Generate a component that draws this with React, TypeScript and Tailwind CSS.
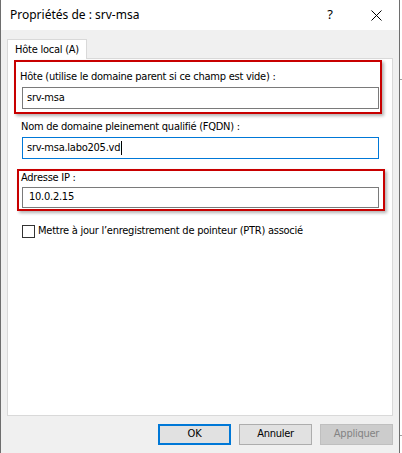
const ui = { fontFamily: '"DejaVu Sans Condensed", "Liberation Sans", sans-serif' };
const title = { fontFamily: '"Noto Sans", "Open Sans", sans-serif' };

function CloseIcon() {
  return (
    <svg width="11" height="11" viewBox="0 0 11 11">
      <path d="M0.5 0.5 L10.5 10.5 M10.5 0.5 L0.5 10.5" stroke="#000" strokeWidth="1" />
    </svg>
  );
}

function Button({ label, primary, disabled }: { label: string; primary?: boolean; disabled?: boolean }) {
  const cls = disabled
    ? "bg-[#cccccc] border border-[#bfbfbf] text-[#838383]"
    : primary
      ? "bg-[#e1e1e1] border-2 border-[#0078d7] text-black"
      : "bg-[#e1e1e1] border border-[#adadad] text-black";
  return (
    <div className={`w-[73px] h-[21px] flex items-center justify-center text-[11px] tracking-[-0.25px] ${cls}`}>
      {label}
    </div>
  );
}

export default function App() {
  return (
    <div className="w-[402px] h-[453px] flex bg-white overflow-hidden" style={ui}>
      {/* dialog */}
      <div className="w-[400px] h-full flex flex-col border-l border-r border-[#6e6e6e]">
        {/* title bar */}
        <div className="h-[30px] bg-white flex items-center shrink-0">
          <span className="pl-[9px] text-[12px] text-black" style={title}>
            Propriétés de : srv-msa
          </span>
          <div className="ml-auto flex h-full">
            <div className="w-[46px] h-full flex items-center justify-center text-[13px]" style={title}>
              ?
            </div>
            <div className="w-[46px] h-full flex items-center justify-center">
              <CloseIcon />
            </div>
          </div>
        </div>

        {/* body */}
        <div className="flex-1 bg-[#f0f0f0] flex flex-col pt-[9px] px-[6px]">
          <div className="relative z-10 w-[80px] h-[20px] -mb-px bg-white border border-b-0 border-[#d9d9d9] flex items-center justify-center text-[11px] tracking-[-0.25px] leading-[12px] text-black">
            Hôte local (A)
          </div>

          <div className="h-[358px] bg-white border border-[#d9d9d9] flex flex-col text-[11px] tracking-[-0.25px] text-black">
            {/* host box */}
            <div className="ml-[6px] mt-px w-[368px] h-[54px] border-2 border-[#c80000] shadow-[2px_2px_3px_rgba(0,0,0,0.3)] flex flex-col">
              <div className="pl-[4px] pt-[8px] leading-[14px]">
                Hôte (utilise le domaine parent si ce champ est vide) :
              </div>
              <div className="ml-[6px] mt-[3px] w-[357px] h-[22px] border border-[#7a7a7a] flex items-center pl-[4px]">
                srv-msa
              </div>
            </div>

            <div className="ml-[13px] mt-[6px] leading-[14px]">
              Nom de domaine pleinement qualifié (FQDN) :
            </div>
            <div className="ml-[14px] mt-[3px] w-[357px] h-[22px] border border-[#0078d7] flex items-center pl-[4px]">
              srv-msa.labo205.vd
              <span className="ml-px w-px h-[14px] bg-black" />
            </div>

            {/* ip box */}
            <div className="ml-[9px] mt-[10px] w-[368px] h-[42px] border-2 border-[#c80000] shadow-[2px_2px_3px_rgba(0,0,0,0.3)] flex flex-col">
              <div className="pl-[2px] pt-px leading-[12px]">Adresse IP :</div>
              <div className="ml-[3px] mt-[3px] w-[357px] h-[21px] border border-[#7a7a7a] flex items-center pl-[6px]">
                10.0.2.15
              </div>
            </div>

            <div className="ml-[14px] mt-[13px] flex items-center">
              <div className="w-[13px] h-[13px] border border-[#333333] bg-white" />
              <span className="ml-[3px] leading-[14px]">
                Mettre à jour l’enregistrement de pointeur (PTR) associé
              </span>
            </div>
          </div>

          <div className="mt-[8px] flex justify-end gap-[8px]">
            <Button label="OK" primary />
            <Button label="Annuler" />
            <Button label="Appliquer" disabled />
          </div>
        </div>
      </div>

      {/* background beyond the dialog */}
      <div className="w-[2px] h-full flex flex-col bg-white">
        <div className="h-[79px] shrink-0" />
        <div className="h-px bg-[#a0a0a0] shrink-0" />
        <div className="h-[355px] shrink-0" />
        <div className="h-px bg-[#a0a0a0] shrink-0" />
      </div>
    </div>
  );
}
